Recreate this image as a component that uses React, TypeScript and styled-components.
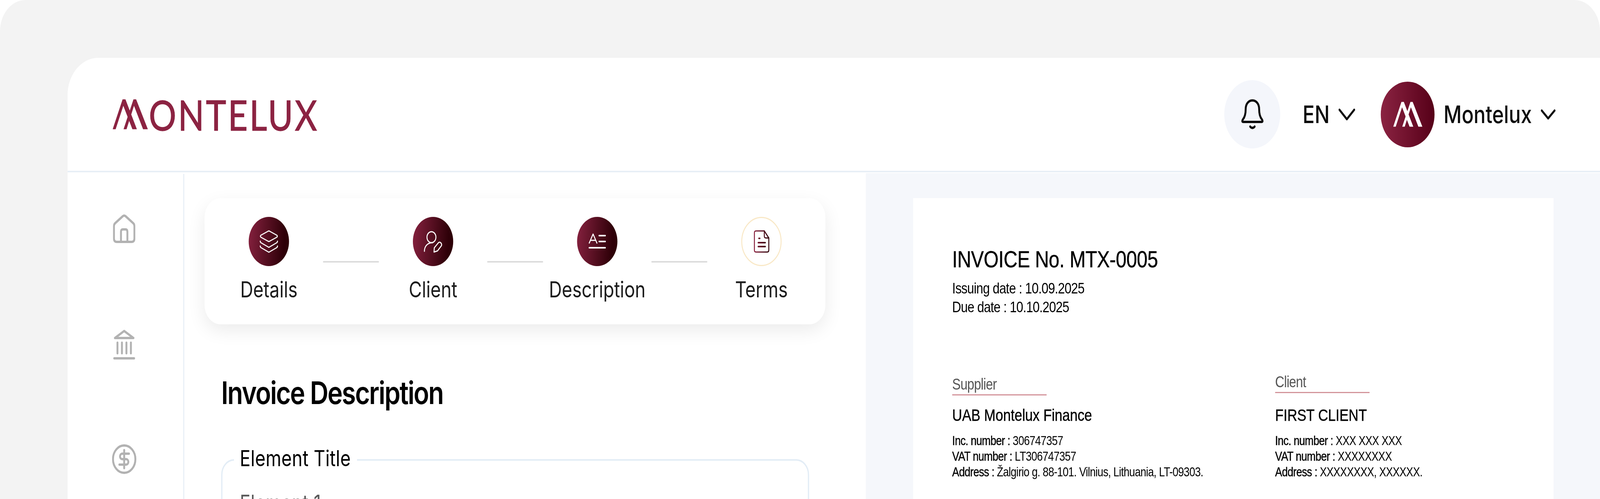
import * as React from 'react'
import styled, { createGlobalStyle } from 'styled-components'

const DESIGN_WIDTH = 4999

const GlobalStyle = createGlobalStyle`
  html, body {
    margin: 0;
    padding: 0;
    background: #fff;
    overflow: hidden;
  }
  * {
    box-sizing: border-box;
  }
`

const Frame = styled.div`
  width: ${DESIGN_WIDTH}px;
  height: 1277px;
  padding: 148px 0 0 211px;
  background: #f3f3f3;
  border-radius: 80px 80px 0 0;
  overflow: hidden;
  transform-origin: left top;
  font-family: Inter, "Liberation Sans", sans-serif;
`

const Card = styled.div`
  display: flex;
  flex-direction: column;
  height: 1129px;
  background: #fff;
  border-radius: 96px 0 0 0;
  overflow: hidden;
`

const Header = styled.header`
  display: flex;
  align-items: center;
  justify-content: space-between;
  flex: none;
  height: 293px;
  padding: 0 139px 0 141px;
  border-bottom: 4px solid #e8eff6;
`

const Logo = styled.div`
  display: flex;
  align-items: center;
  gap: 3px;
  color: #8c2342;
`

const LogoMark = styled.svg`
  display: block;
  width: 110px;
  height: 77px;
  fill: currentColor;
`

const LogoText = styled.span`
  font-family: Lato, sans-serif;
  font-size: 107px;
  line-height: 80px;
  letter-spacing: 5.5px;
  -webkit-text-stroke: 1.5px #8c2342;
`

const Actions = styled.div`
  display: flex;
  align-items: center;
`

const BellButton = styled.div`
  display: flex;
  align-items: center;
  justify-content: center;
  width: 175px;
  height: 175px;
  margin-right: 70px;
  border-radius: 50%;
  background: #f4f6fb;
`

const TopText = styled.span`
  font-size: 62px;
  font-weight: 500;
  line-height: 70px;
  color: #0c0c0c;
`

const Chevron = styled.svg<{ $w: number; $h: number; $after?: number }>`
  display: block;
  flex: none;
  width: ${(p) => p.$w}px;
  height: ${(p) => p.$h}px;
  margin-left: 28px;
  margin-right: ${(p) => p.$after || 0}px;
  fill: none;
  stroke: #111;
  stroke-width: 6;
  stroke-linecap: round;
  stroke-linejoin: round;
`

const Avatar = styled.div`
  display: flex;
  align-items: center;
  justify-content: center;
  width: 168px;
  height: 168px;
  margin-right: 28px;
  border-radius: 50%;
  background: linear-gradient(90deg, #8b2342, #560018);
  color: #fff;
`

const AvatarMark = styled.svg`
  display: block;
  width: 91px;
  height: 65px;
  fill: currentColor;
`

const Body = styled.div`
  display: flex;
  flex: 1;
  min-height: 0;
`

const Sidebar = styled.nav`
  display: flex;
  flex-direction: column;
  align-items: center;
  flex: none;
  width: 365px;
  margin-top: 4px;
  padding: 103px 7px 0 0;
  border-right: 4px solid #ebf1f7;
`

const NavIcon = styled.svg<{ $after: number }>`
  display: block;
  flex: none;
  margin-bottom: ${(p) => p.$after}px;
  fill: none;
  stroke: #b2b2b2;
  stroke-width: 6;
  stroke-linecap: round;
  stroke-linejoin: round;
`

const Main = styled.main`
  flex: none;
  width: 2129px;
  padding: 66px 126px 0 63px;
`

const Stepper = styled.div`
  display: flex;
  align-items: flex-start;
  height: 323px;
  padding: 48px 31px 0 32px;
  background: #fff;
  border-radius: 50px;
  box-shadow: 0 16px 50px rgba(0, 0, 0, 0.08);
`

const Step = styled.div`
  display: flex;
  flex-direction: column;
  align-items: center;
  flex: none;
  width: 338px;
`

const StepCircle = styled.div<{ $pending?: boolean }>`
  display: flex;
  align-items: center;
  justify-content: center;
  width: 126px;
  height: 126px;
  border-radius: 50%;
  background: ${(p) => (p.$pending ? '#fff' : 'linear-gradient(95deg, #86213f, #2e0008 85%)')};
  border: ${(p) => (p.$pending ? '3px solid #f9e8c6' : 'none')};
`

const StepIcon = styled.svg`
  display: block;
  width: 60px;
  height: 60px;
  fill: none;
  stroke: #fff;
  stroke-width: 3;
  stroke-linecap: round;
  stroke-linejoin: round;
`

const StepLabel = styled.div`
  margin-top: 26px;
  font-size: 56px;
  line-height: 68px;
  letter-spacing: -0.1px;
  color: #1c1c1c;
  white-space: nowrap;
`

const Connector = styled.div`
  flex: none;
  width: 175px;
  height: 4px;
  margin-top: 113px;
  border-radius: 2px;
  background: #dcdcdc;
`

const FormBody = styled.div`
  padding: 0 0 0 52px;
`

const Heading = styled.h1`
  margin: 125px 0 0;
  font-size: 80px;
  font-weight: 600;
  line-height: 100px;
  letter-spacing: -2.7px;
  color: #000;
`

const Field = styled.fieldset`
  width: 1837px;
  height: 400px;
  margin: 86px 0 0;
  padding: 0 0 0 54px;
  border: 4px solid #e3edf6;
  border-radius: 40px;
`

const FieldLegend = styled.legend`
  margin-left: -18px;
  padding: 0 19px 8px 18px;
  font-size: 56px;
  line-height: 64px;
  letter-spacing: 0.3px;
  color: #000;
`

const FieldValue = styled.div`
  margin-top: 42px;
  font-size: 56px;
  line-height: 64px;
  letter-spacing: 0.3px;
  color: #5a5a5a;
`

const Preview = styled.aside`
  flex: 1;
  margin-top: 2px;
  padding: 64px 145px 0 148px;
  background: #f5f7fb;
`

const Paper = styled.section`
  height: 900px;
  padding: 122px 0 0 122px;
  background: #fff;
  font-family: "Liberation Sans", Arial, sans-serif;
  color: #000;
`

const InvoiceTitle = styled.div`
  font-size: 60px;
  line-height: 70px;
  letter-spacing: -0.55px;
  -webkit-text-stroke: 0.6px #000;
`

const DateLine = styled.div`
  font-size: 39px;
  line-height: 47.5px;
  letter-spacing: -1px;
`

const Dates = styled.div`
  margin-top: 15px;
`

const Parties = styled.div`
  display: flex;
  margin-top: 145px;
`

const Party = styled.div<{ $w: number }>`
  display: flex;
  flex-direction: column;
  justify-content: flex-end;
  flex: none;
  width: ${(p) => p.$w}px;
`

const PartyLabel = styled.div<{ $after: number }>`
  width: 295px;
  margin-bottom: ${(p) => p.$after}px;
  padding-bottom: 3px;
  border-bottom: 3px solid #d3949b;
  font-size: 40px;
  line-height: 46px;
  letter-spacing: -1px;
  color: #555;
`

const PartyName = styled.div`
  font-size: 43px;
  line-height: 50px;
  letter-spacing: -0.15px;
  -webkit-text-stroke: 0.5px #000;
`

const PartyLines = styled.div`
  margin-top: 21px;
`

const PartyLine = styled.div`
  font-size: 33px;
  line-height: 40px;
  letter-spacing: -0.9px;
  white-space: nowrap;
`

const PartyKey = styled.span`
  -webkit-text-stroke: 0.5px #000;
`

const markPaths = (
  <>
    <polygon points="35,268 128,38 155,38 262,268 220,268 135,88 63,268" />
    <polygon points="137,268 230,38 255,38 365,268 320,268 235,88 165,268" />
  </>
)

const Home = () => (
  <NavIcon $after={222} width="70" height="74" viewBox="0 0 70 74">
    <path d="M7 23L31 5Q35 2.5 39 5L63 23Q67 26 67 31V62Q67 71 58 71H12Q3 71 3 62V31Q3 26 7 23Z" />
    <path d="M25 71V45Q25 39 31 39H39Q45 39 45 45V71" />
  </NavIcon>
)

const Bank = () => (
  <NavIcon $after={217} width="70" height="76" viewBox="0 0 70 76">
    <path d="M6 21L35 3L64 21Z" />
    <path d="M14 33V60M28 33V60M42 33V60M56 33V60" />
    <path d="M4 73H66" />
  </NavIcon>
)

const Dollar = () => (
  <NavIcon $after={0} width="76" height="76" viewBox="-38 -38 76 76">
    <circle cx="0" cy="0" r="35" />
    <path d="M15 -14H-6A7 7 0 0 0 -6 0H6A7 7 0 0 1 6 14H-15" />
    <path d="M0 -23V23" />
  </NavIcon>
)

const Bell = () => (
  <svg width="72" height="78" viewBox="0 0 72 78" fill="none" stroke="#0b0b0b" strokeWidth="6" strokeLinecap="round" strokeLinejoin="round">
    <path d="M36 3C24 3 15 12 15 25C15 38 12 46 6 52Q2 58 8 58H64Q70 58 66 52C60 46 57 38 57 25C57 12 48 3 36 3Z" />
    <path d="M29 70Q36 77 43 70" />
  </svg>
)

const Layers = () => (
  <StepIcon viewBox="-2 -2 60 60">
    <path d="M25 2Q28 0 31 2L53 12Q56 14.5 53 17L31 27Q28 29 25 27L3 17Q0 14.5 3 12Z" />
    <path d="M1 27Q1 30 4 31.5L28 43L52 31.5Q55 30 55 27" />
    <path d="M1 39.5Q1 42.5 4 44L28 55.5L52 44Q55 42.5 55 39.5" />
  </StepIcon>
)

const UserEdit = () => (
  <StepIcon viewBox="-30 -30 60 60">
    <circle cx="-5" cy="-11" r="14" />
    <path d="M-27 25C-27 12 -17 3 -1 3" />
    <path d="M3 27L4 16L17 3Q21 0 25 4Q28 8 26 11L14 24Z" />
  </StepIcon>
)

const TextLines = () => (
  <StepIcon viewBox="-30 -30 60 60">
    <path d="M-25 4L-13 -19L-1 4M-21 -3H-5" />
    <path d="M6 -15H25M6 0H25M-25 16H25" strokeWidth="4" />
  </StepIcon>
)

const DocIcon = () => (
  <StepIcon viewBox="-30 -30 60 60" style={{ stroke: 'url(#docGrad)' }}>
    <defs>
      <linearGradient id="docGrad" gradientUnits="userSpaceOnUse" x1="-22" y1="0" x2="23" y2="0">
        <stop offset="0" stopColor="#8a2340" />
        <stop offset="1" stopColor="#2e0008" />
      </linearGradient>
    </defs>
    <path d="M-17 -27H9L23 -9V22Q23 27 18 27H-17Q-22 27 -22 22V-22Q-22 -27 -17 -27Z" />
    <path d="M9 -27V-14Q9 -9 14 -9H23" />
    <path d="M-8 -8H-5M-10 3H12M-10 13H12" strokeWidth="4" />
  </StepIcon>
)

const steps = [
  { label: 'Details', icon: <Layers /> },
  { label: 'Client', icon: <UserEdit /> },
  { label: 'Description', icon: <TextLines /> },
  { label: 'Terms', icon: <DocIcon />, pending: true },
]

const parties = [
  {
    label: 'Supplier',
    after: 25,
    w: 1009,
    name: 'UAB Montelux Finance',
    inc: '306747357',
    vat: 'LT306747357',
    address: 'Žalgirio g. 88-101. Vilnius, Lithuania, LT-09303.',
  },
  {
    label: 'Client',
    after: 31,
    w: 800,
    name: 'FIRST CLIENT',
    inc: 'XXX XXX XXX',
    vat: 'XXXXXXXX',
    address: 'XXXXXXXX, XXXXXX.',
  },
]

export default function App() {
  // the browser can hold a narrower window than the design width
  const scale = Math.min(1, window.innerWidth / DESIGN_WIDTH)

  return (
    <Frame style={{ transform: `scaleX(${scale})` }}>
      <GlobalStyle />
      <Card>
        <Header>
          <Logo>
            <LogoMark viewBox="35 38 330 230">{markPaths}</LogoMark>
            <LogoText>ONTELUX</LogoText>
          </Logo>
          <Actions>
            <BellButton>
              <Bell />
            </BellButton>
            <TopText>EN</TopText>
            <Chevron $w={52} $h={30} $after={80} viewBox="0 0 52 30">
              <polyline points="3,3 26,27 49,3" />
            </Chevron>
            <Avatar>
              <AvatarMark viewBox="35 38 330 230">{markPaths}</AvatarMark>
            </Avatar>
            <TopText>Montelux</TopText>
            <Chevron $w={46} $h={26} viewBox="0 0 46 26">
              <polyline points="3,3 23,23 43,3" />
            </Chevron>
          </Actions>
        </Header>
        <Body>
          <Sidebar>
            <Home />
            <Bank />
            <Dollar />
          </Sidebar>
          <Main>
            <Stepper>
              {steps.map((s, i) => (
                <React.Fragment key={s.label}>
                  {i > 0 && <Connector />}
                  <Step>
                    <StepCircle $pending={s.pending}>{s.icon}</StepCircle>
                    <StepLabel>{s.label}</StepLabel>
                  </Step>
                </React.Fragment>
              ))}
            </Stepper>
            <FormBody>
              <Heading>Invoice Description</Heading>
              <Field>
                <FieldLegend>Element Title</FieldLegend>
                <FieldValue>Element 1</FieldValue>
              </Field>
            </FormBody>
          </Main>
          <Preview>
            <Paper>
              <InvoiceTitle>INVOICE No. MTX-0005</InvoiceTitle>
              <Dates>
                <DateLine>Issuing date : 10.09.2025</DateLine>
                <DateLine>Due date : 10.10.2025</DateLine>
              </Dates>
              <Parties>
                {parties.map((p) => (
                  <Party key={p.label} $w={p.w}>
                    <PartyLabel $after={p.after}>{p.label}</PartyLabel>
                    <PartyName>{p.name}</PartyName>
                    <PartyLines>
                      <PartyLine><PartyKey>Inc. number :</PartyKey> {p.inc}</PartyLine>
                      <PartyLine><PartyKey>VAT number :</PartyKey> {p.vat}</PartyLine>
                      <PartyLine><PartyKey>Address :</PartyKey> {p.address}</PartyLine>
                    </PartyLines>
                  </Party>
                ))}
              </Parties>
            </Paper>
          </Preview>
        </Body>
      </Card>
    </Frame>
  )
}
